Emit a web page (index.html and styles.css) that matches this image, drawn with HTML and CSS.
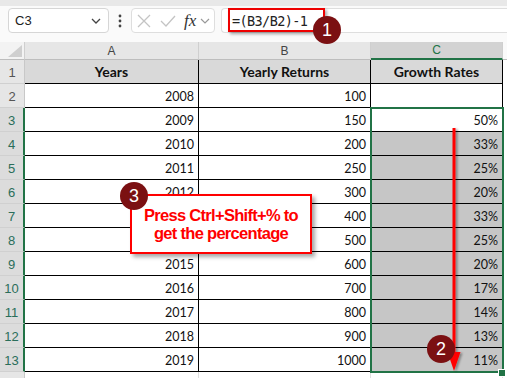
FILE: index.html
```html
<!DOCTYPE html>
<html>
<head>
<meta charset="utf-8">
<link rel="stylesheet" href="styles.css">
</head>
<body>
<div class="app">
  <div class="topband"></div>
  <div class="toolbar">
    <div class="namebox">
      <span class="cellref">C3</span>
      <svg class="chev" width="10" height="6" viewBox="0 0 10 6"><path d="M1 1 L5 5 L9 1" fill="none" stroke="#444" stroke-width="1.3"/></svg>
    </div>
    <div class="dots">
      <svg width="4" height="14" viewBox="0 0 4 14"><circle cx="2" cy="2" r="1.4" fill="#444"/><circle cx="2" cy="7" r="1.4" fill="#444"/><circle cx="2" cy="12" r="1.4" fill="#444"/></svg>
    </div>
    <div class="fxbox">
      <svg width="14" height="14" viewBox="0 0 14 14"><path d="M1 1 L13 13 M13 1 L1 13" stroke="#c4c4c4" stroke-width="1.3" fill="none"/></svg>
      <svg width="16" height="14" viewBox="0 0 16 14"><path d="M1 7 L6 12 L15 2" stroke="#c4c4c4" stroke-width="1.3" fill="none"/></svg>
      <span class="fx">fx</span>
      <svg width="10" height="6" viewBox="0 0 10 6"><path d="M1 1 L5 5 L9 1" fill="none" stroke="#999" stroke-width="1.2"/></svg>
    </div>
    <div class="formula">
      <span class="ftext">=(B3/B2)-1</span>
      <div class="hl"></div>
    </div>
  </div>

  <div class="sheet">
    <div class="grid">
      <div class="corner"><svg width="14" height="12" viewBox="0 0 14 12"><path d="M14 0 L14 12 L0 12 Z" fill="#cfcfcf"/></svg></div>
      <div class="ch">A</div><div class="ch">B</div><div class="ch sel">C</div><div class="ch ext"></div>

      <div class="rh">1</div><div class="c th">Years</div><div class="c th">Yearly Returns</div><div class="c th">Growth Rates</div><div class="x"></div>
      <div class="rh">2</div><div class="c">2008</div><div class="c">100</div><div class="c"></div><div class="x"></div>
      <div class="rh on">3</div><div class="c">2009</div><div class="c">150</div><div class="c">50%</div><div class="x"></div>
      <div class="rh on">4</div><div class="c">2010</div><div class="c">200</div><div class="c g">33%</div><div class="x"></div>
      <div class="rh on">5</div><div class="c">2011</div><div class="c">250</div><div class="c g">25%</div><div class="x"></div>
      <div class="rh on">6</div><div class="c">2012</div><div class="c">300</div><div class="c g">20%</div><div class="x"></div>
      <div class="rh on">7</div><div class="c"></div><div class="c">400</div><div class="c g">33%</div><div class="x"></div>
      <div class="rh on">8</div><div class="c"></div><div class="c">500</div><div class="c g">25%</div><div class="x"></div>
      <div class="rh on">9</div><div class="c">2015</div><div class="c">600</div><div class="c g">20%</div><div class="x"></div>
      <div class="rh on">10</div><div class="c">2016</div><div class="c">700</div><div class="c g">17%</div><div class="x"></div>
      <div class="rh on">11</div><div class="c">2017</div><div class="c">800</div><div class="c g">14%</div><div class="x"></div>
      <div class="rh on">12</div><div class="c">2018</div><div class="c">900</div><div class="c g">13%</div><div class="x"></div>
      <div class="rh on">13</div><div class="c">2019</div><div class="c">1000</div><div class="c g">11%</div><div class="x"></div>
      <div class="rh"></div><div class="e"></div><div class="e"></div><div class="e"></div><div class="x"></div>
    </div>
    <div class="selection"></div>
    <div class="handle"></div>
  </div>

  <svg class="arrow" width="507" height="378" viewBox="0 0 507 378">
    <defs>
      <filter id="sh" x="-50%" y="-10%" width="200%" height="120%">
        <feDropShadow dx="2" dy="1" stdDeviation="1" flood-color="#000" flood-opacity="0.35"/>
      </filter>
    </defs>
    <g filter="url(#sh)">
      <rect x="452.5" y="128" width="3" height="228" fill="#ff0000"/>
      <path d="M447.5 352 L460.5 352 L454 371 Z" fill="#ff0000"/>
    </g>
  </svg>

  <div class="callout">Press Ctrl+Shift+% to<br>get the percentage</div>
  <div class="badge b1">1</div>
  <div class="badge b2">2</div>
  <div class="badge b3">3</div>
</div>
</body>
</html>
```
FILE: styles.css
```css
* { box-sizing: border-box; }
html, body { margin: 0; padding: 0; }
body { background: #fff; font-family: Lato, "Open Sans", sans-serif; }

.app {
  position: relative;
  width: 507px;
  height: 378px;
  overflow: hidden;
  background: #fafafa;
}

.topband { height: 6px; background: #e8e8e8; }

.toolbar {
  display: flex;
  align-items: flex-start;
  height: 36px;
  padding: 2px 0 0 8px;
}

.namebox {
  width: 101px;
  height: 25px;
  background: #fff;
  border: 1px solid #d6d6d6;
  border-radius: 4px;
  display: flex;
  align-items: center;
  justify-content: space-between;
  padding: 0 7px 0 6px;
}
.cellref { font-family: "Liberation Sans", Arial, sans-serif; font-size: 13px; color: #222; }

.dots {
  width: 22px;
  height: 25px;
  display: flex;
  align-items: center;
  justify-content: center;
}

.fxbox {
  width: 84px;
  height: 25px;
  background: #fff;
  border: 1px solid #dedede;
  border-radius: 4px;
  display: flex;
  align-items: center;
  gap: 9px;
  padding-left: 5px;
}
.fx {
  font-family: "Liberation Serif", "DejaVu Serif", serif;
  font-style: italic;
  font-size: 17px;
  color: #333;
  margin-left: -1px;
  margin-right: -5px;
  line-height: 1;
}

.formula {
  position: relative;
  margin-left: 6px;
  flex: 1;
  height: 25px;
  background: #fff;
  border: 1px solid #dedede;
  border-right: none;
  border-radius: 4px 0 0 4px;
  display: flex;
  align-items: center;
  padding-left: 10px;
}
.ftext {
  font-family: "DejaVu Sans Mono", "Liberation Mono", monospace;
  font-size: 13.5px;
  letter-spacing: -0.6px;
  color: #222;
}
.hl {
  position: absolute;
  left: 6px;
  top: -1px;
  width: 97px;
  height: 24px;
  border: 2px solid #ee0000;
  box-shadow: 2px 2px 3px rgba(0,0,0,0.35);
}

.sheet { position: relative; }

.grid {
  display: grid;
  grid-template-columns: 25px 174px 172px 132px 4px;
  grid-template-rows: 18px repeat(13, 24px) 10px;
}

.corner {
  background: #f3f3f3;
  border-right: 1px solid #cfcfcf;
  border-bottom: 1px solid #bdbdbd;
  display: flex;
  align-items: flex-end;
  justify-content: flex-end;
  padding: 0 2px 2px 0;
}

.ch {
  background: #e6e6e6;
  border-right: 1px solid #cfcfcf;
  border-bottom: 1px solid #bdbdbd;
  font-family: "Liberation Sans", Arial, sans-serif;
  font-size: 12px;
  color: #444;
  display: flex;
  align-items: center;
  justify-content: center;
}
.ch.sel {
  background: #d3d3d3;
  color: #217346;
  border-bottom: 2px solid #217346;
}
.ch.ext { background: #fafafa; border-right: none; }

.rh {
  background: #e6e6e6;
  border-right: 1px solid #c8c8c8;
  border-bottom: 1px solid #d0d0d0;
  font-family: "Liberation Sans", Arial, sans-serif;
  font-size: 13px;
  color: #555;
  display: flex;
  align-items: flex-end;
  justify-content: center;
  padding-bottom: 3px;
}
.rh.on {
  background: #dcdcdc;
  color: #2a6e5a;
  border-right: 2px solid #217346;
}

.c {
  background: #fff;
  border-right: 1px solid #000;
  border-bottom: 1px solid #000;
  font-size: 12.5px;
  color: #111;
  display: flex;
  align-items: flex-end;
  justify-content: flex-end;
  padding: 0 4px 3px 0;
}
.c.th {
  background: #d9d9d9;
  font-weight: 700;
  font-size: 14px;
  justify-content: center;
  padding: 0 0 3px 0;
}
.c.g { background: #c6c6c6; }

.e { background: #fff; border-right: 1px solid #e0e0e0; }
.x { background: #fff; }

.selection {
  position: absolute;
  left: 370px;
  top: 65px;
  width: 134px;
  height: 266px;
  border: 2px solid #217346;
}
.handle {
  position: absolute;
  left: 498px;
  top: 327px;
  width: 8px;
  height: 8px;
  background: #217346;
  border: 1px solid #fff;
}

.arrow { position: absolute; left: 0; top: 0; pointer-events: none; }

.callout {
  position: absolute;
  left: 130px;
  top: 194px;
  width: 182px;
  height: 60px;
  background: #fff;
  border: 2px solid #ff0000;
  box-shadow: 3px 3px 4px rgba(0,0,0,0.35);
  color: #ff0000;
  font-family: "Liberation Sans", Arial, sans-serif;
  font-weight: 700;
  font-size: 16.5px;
  letter-spacing: -0.7px;
  line-height: 18px;
  text-align: center;
  display: flex;
  align-items: center;
  justify-content: center;
}

.badge {
  position: absolute;
  width: 28px;
  height: 28px;
  border-radius: 50%;
  background: #7b1012;
  color: #fff;
  font-family: "Liberation Sans", Arial, sans-serif;
  font-size: 18px;
  display: flex;
  align-items: center;
  justify-content: center;
}
.b1 { left: 313px; top: 16px; }
.b2 { left: 427px; top: 335px; }
.b3 { left: 120px; top: 182px; }
```
